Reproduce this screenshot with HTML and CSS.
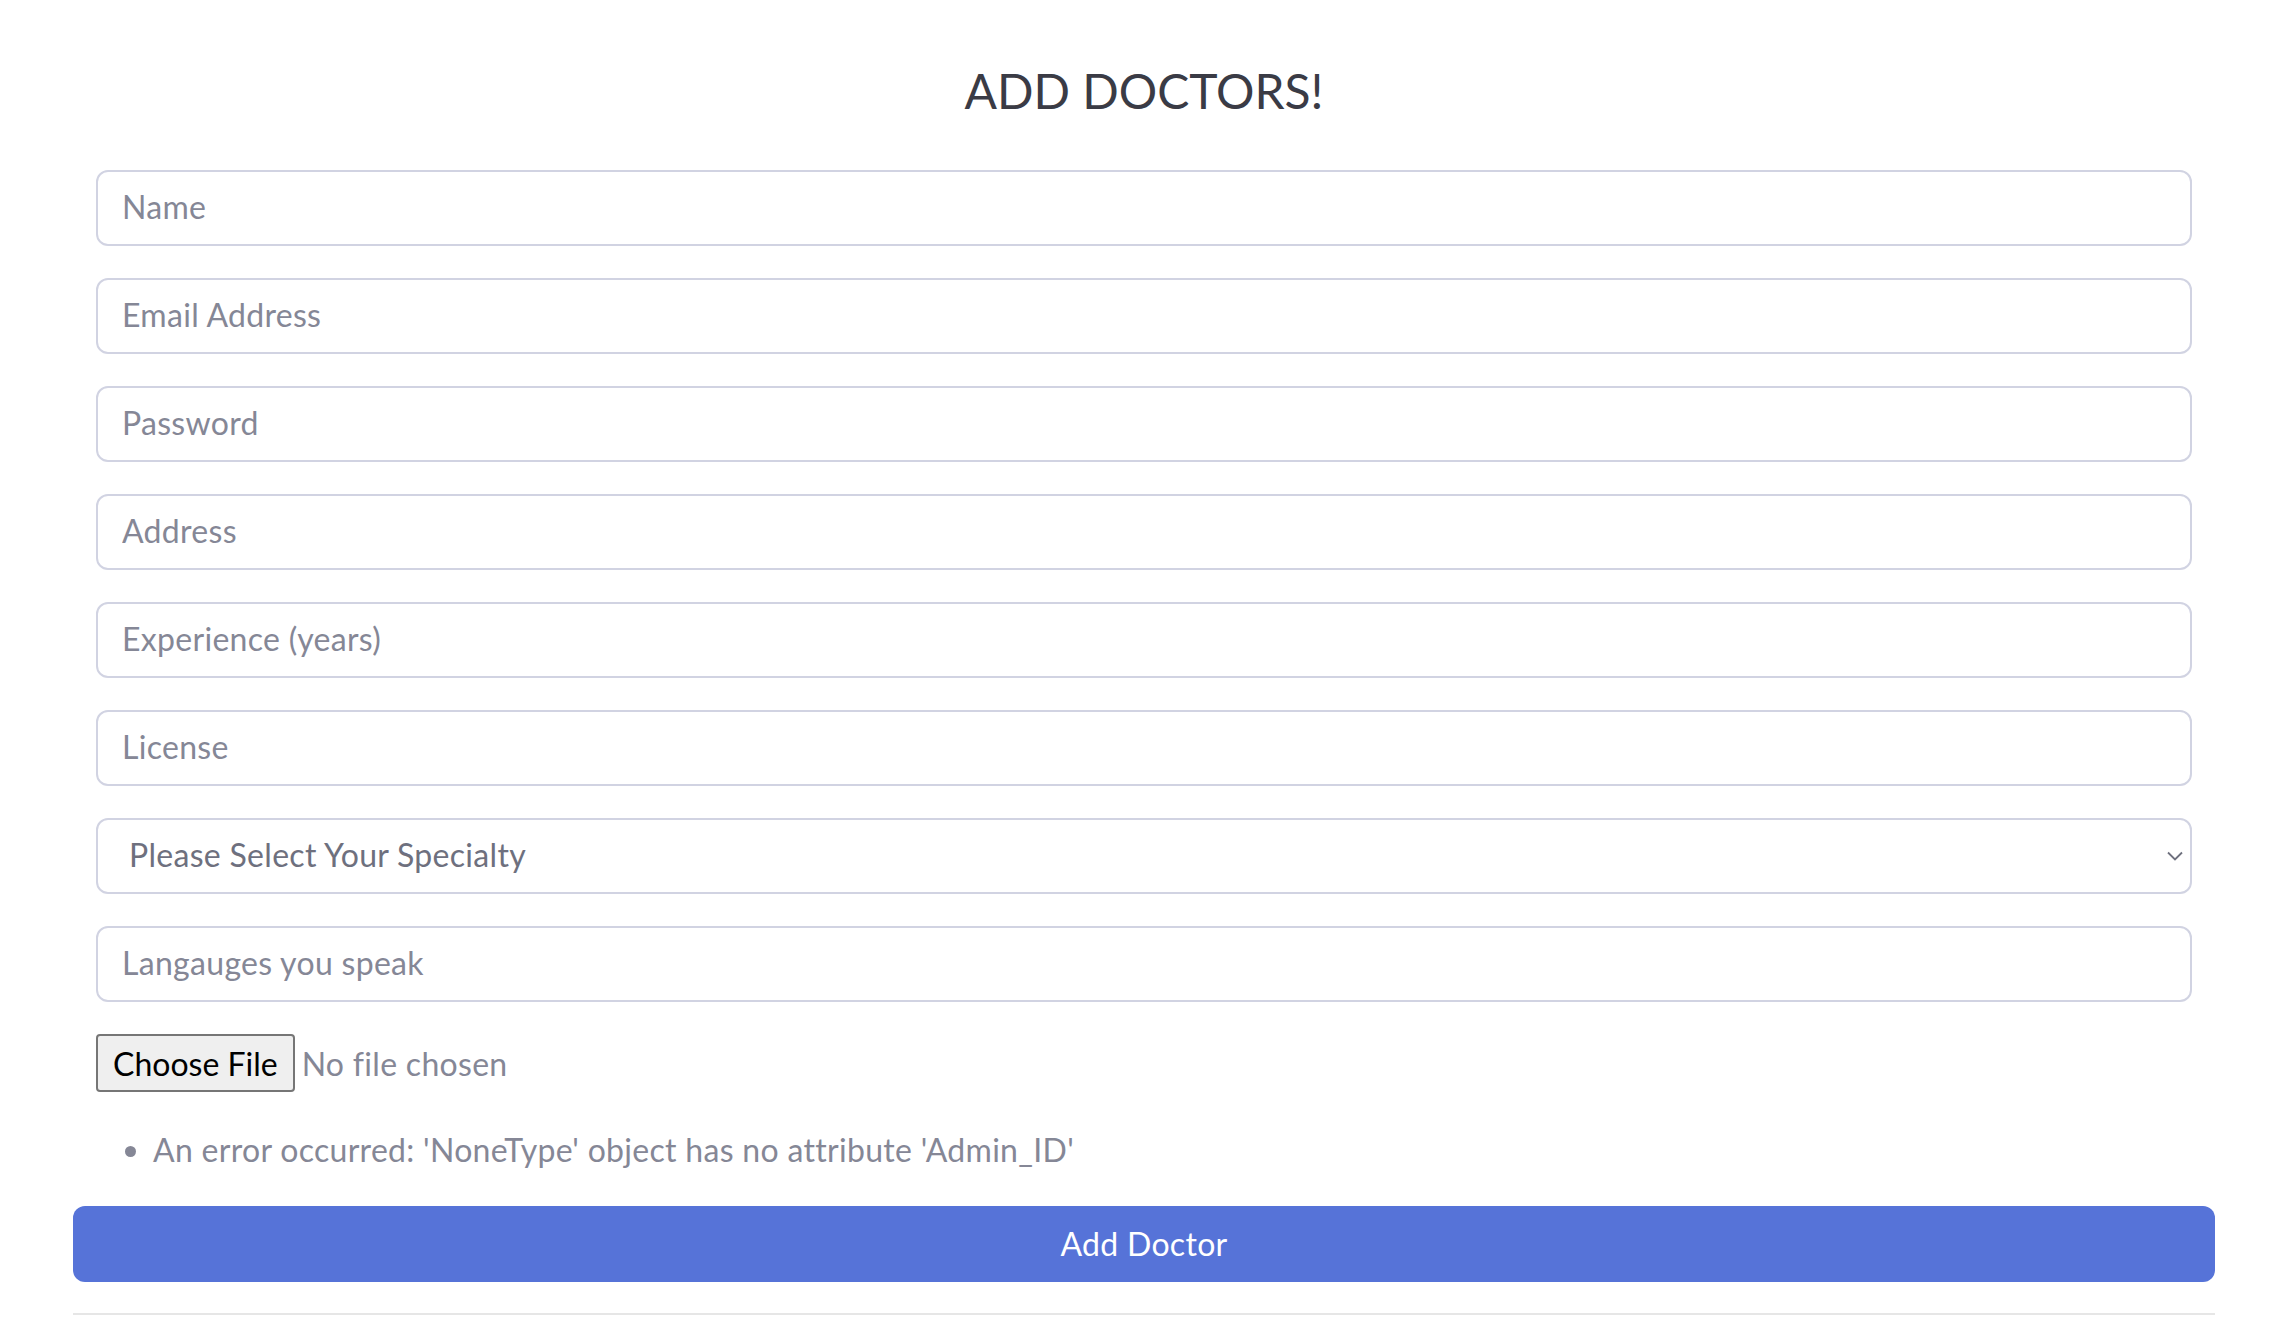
FILE: index.html
```html
<!DOCTYPE html>
<html lang="en">
<head>
<meta charset="utf-8">
<title>Add Doctors</title>
<link rel="stylesheet" href="styles.css">
</head>
<body>
<div class="page">
  <h1 class="title">ADD DOCTORS!</h1>
  <form class="form">
    <div class="fields">
      <input class="field" type="text" placeholder="Name">
      <input class="field" type="email" placeholder="Email Address">
      <input class="field" type="password" placeholder="Password">
      <input class="field" type="text" placeholder="Address">
      <input class="field" type="text" placeholder="Experience (years)">
      <input class="field" type="text" placeholder="License">
      <div class="select-wrap">
        <select class="field select">
          <option>Please Select Your Specialty</option>
        </select>
        <svg class="chevron" width="16" height="10" viewBox="0 0 16 10"><path d="M1 1.5 L8 8.5 L15 1.5" fill="none" stroke="#6e707e" stroke-width="1.8"/></svg>
      </div>
      <input class="field" type="text" placeholder="Langauges you speak">
      <div class="file-row">
        <input class="file" type="file">
      </div>
      <ul class="errors">
        <li>An error occurred: 'NoneType' object has no attribute 'Admin_ID'</li>
      </ul>
    </div>
    <button class="submit" type="submit">Add Doctor</button>
  </form>
  <hr class="rule">
</div>
</body>
</html>
```
FILE: styles.css
```css
* { box-sizing: border-box; }
html, body { margin: 0; padding: 0; background: #fff; }
body {
  font-family: "Lato", "Liberation Sans", sans-serif;
  color: #858796;
}
.page {
  padding: 62px 67px 0 73px;
}
.title {
  margin: 0 0 50px 0;
  height: 58px;
  line-height: 58px;
  text-align: center;
  font-size: 48px;
  font-weight: 400;
  color: #3a3b45;
}
.form { margin: 0; }
.fields {
  padding: 0 23px;
  display: flex;
  flex-direction: column;
  gap: 32px;
}
.field {
  display: block;
  width: 100%;
  height: 76px;
  padding: 0 24px 3px 24px;
  border: 2px solid #d1d3e2;
  border-radius: 12px;
  font-family: inherit;
  font-size: 32px;
  letter-spacing: 0.3px;
  color: #6e707e;
  background: #fff;
  outline: none;
}
.field::placeholder { color: #858796; opacity: 1; }
.select-wrap { position: relative; }
.select {
  appearance: none;
  -webkit-appearance: none;
  padding-left: 31px;
  color: #6e707e;
}
.chevron {
  position: absolute;
  right: 9px;
  top: 33px;
}
.file-row {
  height: 58px;
  display: flex;
  align-items: center;
}
.file {
  font-family: inherit;
  font-size: 32px;
  letter-spacing: 0.3px;
  color: #858796;
  height: 58px;
}
.file::file-selector-button {
  height: 58px;
  padding: 0 15px;
  margin-right: 7px;
  border: 2px solid #767676;
  border-radius: 4px;
  background: #efefef;
  color: #000;
  font-family: inherit;
  font-size: 32px;
  letter-spacing: 0;
}
.errors {
  margin: 2px 0 0 0;
  padding: 0 0 0 57px;
  font-size: 32px;
  letter-spacing: 0.3px;
  line-height: 48px;
  color: #858796;
}
.submit {
  display: block;
  width: 100%;
  height: 76px;
  margin-top: 32px;
  padding-bottom: 2px;
  border: none;
  border-radius: 12px;
  background: #5673d8;
  color: #fff;
  font-family: inherit;
  font-size: 32px;
  letter-spacing: 0.3px;
}
.rule {
  margin: 31px 0 0 0;
  border: 0;
  border-top: 2px solid #e6e6e6;
}
```
